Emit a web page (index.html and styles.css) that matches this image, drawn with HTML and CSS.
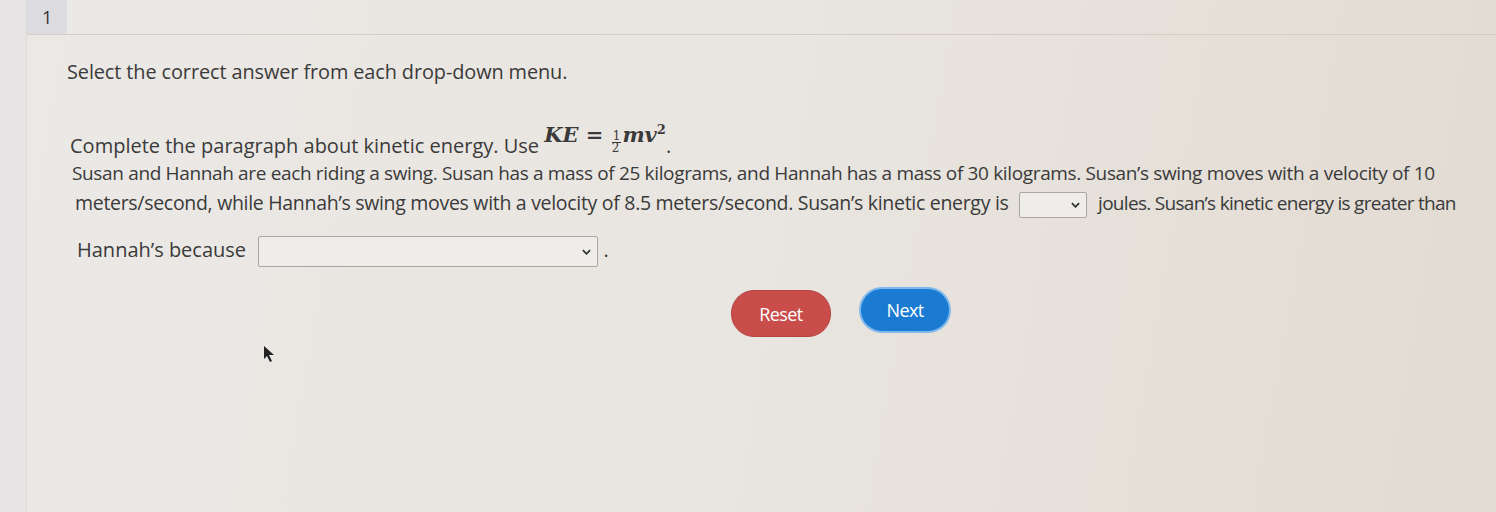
FILE: index.html
```html
<!DOCTYPE html>
<html>
<head>
<meta charset="utf-8">
<link rel="stylesheet" href="styles.css">
</head>
<body>
<div class="page">
  <div class="sidebar"></div>
  <div class="main">
    <div class="topbar"><div class="tab">1</div></div>
    <div class="content">
      <p class="instr">Select the correct answer from each drop-down menu.</p>
      <p class="prompt">Complete the paragraph about kinetic energy. Use <span class="math"><i>KE</i> = <span class="frac"><span class="num">1</span><span class="den">2</span></span><i>mv</i><sup>2</sup></span>.</p>
      <p class="para"><span class="l1">Susan and Hannah are each riding a swing. Susan has a mass of 25 kilograms, and Hannah has a mass of 30 kilograms. Susan’s swing moves with a velocity of 10</span><br><span class="l2">meters/second, while Hannah’s swing moves with a velocity of 8.5 meters/second. Susan’s kinetic energy is <span class="sel sel-small"><svg class="chev" viewBox="0 0 10 6"><path d="M1 1 L5 5 L9 1" fill="none" stroke="#333" stroke-width="2"/></svg></span> <span class="l2b">joules. Susan’s kinetic energy is greater than</span></span><br><span class="l3">Hannah’s because <span class="sel sel-wide"><svg class="chev" viewBox="0 0 10 6"><path d="M1 1 L5 5 L9 1" fill="none" stroke="#333" stroke-width="2"/></svg></span> .</span></p>
      <div class="buttons">
        <span class="btn reset">Reset</span>
        <span class="btn next">Next</span>
      </div>
      <div class="cursorrow"><svg class="cursor" viewBox="0 0 12 18" width="12" height="18"><path d="M1 1 L1 14 L4 11 L7 17 L9 16 L6 10 L11 10 Z" fill="#222"/></svg></div>
    </div>
  </div>
</div>
</body>
</html>
```
FILE: styles.css
```css
html, body { margin: 0; padding: 0; }
body {
  width: 1496px; height: 512px; overflow: hidden;
  background: linear-gradient(100deg, #ebe9e6 0%, #e9e5e0 50%, #e2dbd2 100%);
  font-family: "Open Sans", "Liberation Sans", sans-serif;
  color: #3a3a3a;
}
.page { display: flex; height: 512px; }
.sidebar { width: 26px; flex-shrink: 0; background: #e6e4e5; border-right: 1px solid #dcdad9; }
.main { flex: 1; min-width: 0; overflow: hidden; }
.topbar { height: 34px; border-bottom: 1px solid #d3cdc6; display: flex; }
.tab { width: 40px; background: #dcdbdf; font-size: 18px; text-align: left; padding-left: 15px; padding-top: 3px; box-sizing: border-box; line-height: 28px; color: #333; }
.content { padding-left: 40px; }
.instr { margin: 24px 0 0 0; font-size: 19.9px; line-height: 26px; letter-spacing: -0.1px; white-space: nowrap; }
.prompt { margin: 43px 0 0 3px; font-size: 20px; line-height: 26px; letter-spacing: 0; white-space: nowrap; }
.math { font-family: "DejaVu Serif", "Liberation Serif", serif; font-weight: bold; font-size: 21px; position: relative; top: -11px; letter-spacing: 0; }
.math i { font-style: italic; }
.frac { display: inline-flex; flex-direction: column; font-size: 12px; line-height: 11px; vertical-align: 2px; margin: 0 1px; font-weight: normal; }
.num { border-bottom: 1px solid #333; padding: 0 1px; }
.math sup { font-size: 13px; }
.para { margin: -7px 0 0 5px; font-size: 19px; line-height: 30px; letter-spacing: -0.35px; white-space: nowrap; }
.l2 { margin-left: 3px; font-size: 19.5px; letter-spacing: -0.3px; }
.l2b { font-size: 19px; letter-spacing: -0.7px; }
.sel { display: inline-flex; align-items: center; justify-content: flex-end; box-sizing: border-box; border: 1px solid #a9a6a3; background: #efede9; vertical-align: middle; border-radius: 2px; padding-right: 6px; }
.sel-small { width: 68px; height: 26px; margin: 0 6px; }
.sel-wide { width: 340px; height: 31px; margin-left: 7px; }
.chev { width: 9px; height: 6px; }
.l3 { display: inline-block; margin-top: 17px; margin-left: 5px; font-size: 20px; letter-spacing: 0; }
.buttons { display: flex; gap: 28px; margin: 20px 0 0 664px; align-items: flex-start; }
.btn { display: inline-flex; align-items: center; justify-content: center; border-radius: 23px; color: #fff; font-size: 18px; letter-spacing: -0.6px; }
.reset { width: 98px; height: 45px; background: #c94d4a; border: 1px solid #b54542; margin-top: 3px; }
.next { width: 88px; height: 42px; background: #1b7bd2; border: 2px solid #7fb8ec; }
.cursorrow { margin: 8px 0 0 196px; }
.cursor { display: block; }
```
